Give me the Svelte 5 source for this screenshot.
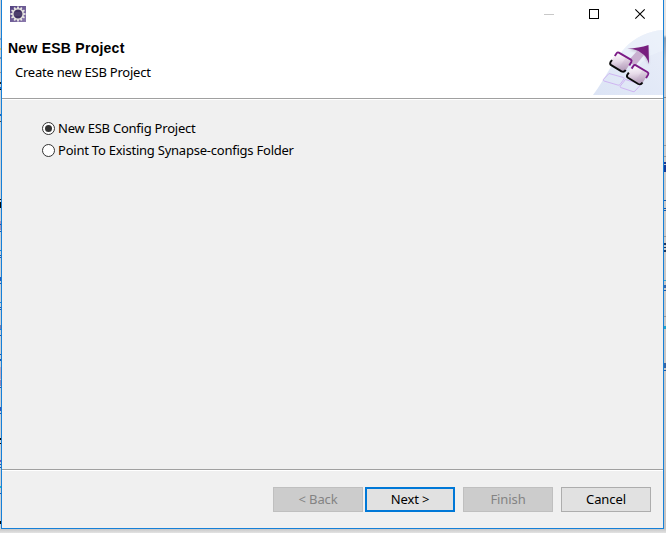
<script>
  const leftMarks = [
    [38, 2, '#8aa4c4'], [48, 2, '#e0bd68'], [57, 2, '#7891b0'], [72, 1, '#999'], [82, 2, '#222'], [87, 2, '#236cc0'], [89, 1, '#111'],
    [114, 2, '#176ac1'], [121, 1, '#444'], [199, 1, '#111'], [202, 6, '#080808'], [221, 9, '#a996bc'], [224, 1, '#1758b1'], [231, 1, '#1758b1'],
    [250, 1, '#1684dd'], [255, 1, '#1758b1'], [257, 1, '#1758b1'], [277, 4, '#225dbb'], [283, 1, '#1758b1'],
    [302, 1, '#1684dd'], [307, 1, '#1758b1'], [309, 1, '#1758b1'], [325, 4, '#817da9'], [329, 1, '#1684dd'], [335, 1, '#1758b1'],
    [354, 1, '#1758b1'], [359, 2, '#1758b1'], [367, 12, '#c2aabd'], [380, 6, '#9688b5'], [387, 1, '#1758b1'],
    [407, 4, '#3155b7'], [413, 1, '#1758b1'], [438, 2, '#050505'], [443, 1, '#050505'], [460, 2, '#6654b8'], [464, 1, '#1758b1'], [467, 1, '#1758b1'],
    [486, 2, '#24b4d0'], [493, 1, '#1758b1'], [521, 3, '#050505']
  ];
  const rightMarks = [
    [97, 1, '#888'], [145, 1, '#999'], [156, 1, '#999'], [162, 2, '#173b9a'], [165, 7, '#173b9a'], [200, 1, '#1559ae'], [208, 1, '#1559ae'], [210, 1, '#1559ae'],
    [236, 1, '#999'], [243, 2, '#1b3764'], [247, 1, '#1b3764'], [250, 2, '#1b3764'], [280, 1, '#32a4ce'], [285, 3, '#3b69ab'], [290, 1, '#1559ae'],
    [316, 1, '#999'], [326, 3, '#22a4cb'], [363, 5, '#3766a5'], [370, 1, '#1559ae']
  ];
  const teeth = Array.from({ length: 12 }, (_, i) => i * 30);
  const tiles = [[0, 0], [16.8, 12.6]];
  let selected = $state('new');
</script>

<div class="desktop">
  <div class="edge left">
    {#each leftMarks as [y, h, color]}
      <i style="top:{y}px;height:{h}px;background:{color}"></i>
    {/each}
  </div>
  <main class="window">
    <header>
      <div class="titlebar">
        <svg class="app-icon" width="16" height="16" viewBox="0 0 16 16">
          <defs><linearGradient id="app-bg" x2="1" y2="1"><stop stop-color="#51407f" /><stop offset="1" stop-color="#8c7aad" /></linearGradient></defs>
          <rect width="16" height="16" fill="url(#app-bg)" />
          {#each teeth as angle}
            <rect x="7.1" y=".5" width="1.8" height="3" fill="#e9e7e4" transform="rotate({angle} 8 8)" />
          {/each}
          <circle cx="8" cy="8" r="5.2" fill="#3f3160" stroke="#e6e4df" stroke-width="1.5" />
          <path d="M4 7h8M4 9h8" stroke="#655580" stroke-width=".8" />
        </svg>
        <svg class="controls" width="102" height="12" viewBox="0 0 102 12" fill="none">
          <path d="M0 6.5h10" stroke="#c8c8c8" />
          <rect x="45.5" y="1.5" width="9" height="9" stroke="#000" />
          <path d="m91.3 1.3 9.4 9.4m0-9.4-9.4 9.4" stroke="#000" stroke-width="1.1" />
        </svg>
      </div>
      <div class="heading">
        <div class="copy">
          <h1>New ESB Project</h1>
          <p>Create new ESB Project</p>
        </div>
        <svg class="banner" width="71" height="67" viewBox="0 0 71 67" fill="none">
          <defs>
            <linearGradient id="sky" x1="0" y1="1" x2="1" y2="0"><stop stop-color="#dce4f5" /><stop offset="1" stop-color="#e9eef9" /></linearGradient>
            <linearGradient id="tile" x1=".4" y1="0" x2=".55" y2="1"><stop stop-color="#fff" /><stop offset=".45" stop-color="#e7dbe9" /><stop offset="1" stop-color="#ac94b3" /></linearGradient>
            <linearGradient id="head"><stop stop-color="#a986b3" /><stop offset=".35" stop-color="#7b2582" /><stop offset="1" stop-color="#761d7d" /></linearGradient>
            <filter id="soft" x="-30%" y="-30%" width="160%" height="160%"><feGaussianBlur stdDeviation="1" /></filter>
          </defs>
          <path d="M1 67C14 50 19 35 33 20 43 9 57 3 71 2v65Z" fill="url(#sky)" />
          <path d="M30 23C42 9 57 3 71 2v21C58 26 50 33 45 40Z" fill="#edf2fb" opacity=".65" />
          <path d="m17 45.5 14.5 4q1.2.5.5 1.5l-4 5.5q-.7 1-2 .6L12 53q-1.3-.5-.5-1.7Zm16.5 6 14 4.5q1.2.5.5 1.5L43 63q-.8 1-2 .6L28.7 59.5q-1.2-.5-.4-1.5Z" stroke="#cfb5f2" />
          <path d="m37 22 19-3 1 18-5-10-6-3Z" fill="#8a7794" opacity=".4" filter="url(#soft)" />
          <path d="m46 22 6 5-9 11-7-5Z" fill="#c9b0d0" />
          <path d="M35 20.7C43 20.4 50 19 56.5 17L57 36C55.5 31 54 29 52 27L46.5 23C43 21.2 39 20.8 35 20.7Z" fill="url(#head)" />
          {#each tiles as [x, y]}
            <g transform="translate({x} {y})">
              <path d="M26.2 24.4 38.8 31.5q1 .8.5 2.2L34 42q-1.5 2-4 1L19.3 36.3q-1.7-1.3-.5-3.3l5-7.5q1-1.7 2.4-1.1Z" fill="url(#tile)" />
              <path d="m33.5 30-6 9 4 2.7q2 .3 3-1.7l4-6.5Z" fill="#bea6c3" opacity=".25" />
              <path d="m22.8 28 2-3q.8-1 2-.4l12 7q1.3.9.5 2.4l-2 3.5" stroke="#7b1b86" stroke-width="1.9" />
              <path d="m20 32-1.6 2.3q-.8 1.7.8 2.8L29.5 43.4q2.6 1.2 4.2-1.4" stroke="#090909" stroke-width="1.9" />
            </g>
          {/each}
        </svg>
      </div>
    </header>
    <section>
      <label><input type="radio" bind:group={selected} value="new" /><span class="new-option">New ESB Config Project</span></label>
      <label><input type="radio" bind:group={selected} value="existing" /><span class="existing-option">Point To Existing Synapse-configs Folder</span></label>
    </section>
    <footer>
      <button disabled>&lt; Back</button>
      <button class="next">Next &gt;</button>
      <button class="finish" disabled>Finish</button>
      <button class="cancel">Cancel</button>
    </footer>
  </main>
  <div class="edge right">
    {#each rightMarks as [y, h, color]}
      <i style="top:{y}px;height:{h}px;background:{color}"></i>
    {/each}
  </div>
</div>

<style>
  * { box-sizing: border-box; }
  :global(body) { overflow: hidden; }
  .desktop { width: 666px; height: 533px; display: flex; background: linear-gradient(#bcbcbc 0 529px, #c8c8c8 529px, #e3e3e3 533px); font: 13px/18px "Noto Sans", sans-serif; letter-spacing: -.23px; color: #000; }
  .edge { position: relative; flex: none; height: 529px; background: #ccd1d7; }
  .left { width: 1px; }
  .right { width: 2px; background: linear-gradient(#e4e4e4 0 35px, #8b9fb4 38px, #b9c2cc 60px, #ccc 100px, #c5c5c5); }
  .edge i { position: absolute; left: 0; width: 100%; }
  .window { width: 663px; height: 529px; display: flex; flex-direction: column; border: solid #1680d8; border-width: 0 1px 1px; background: #f0f0f0; }
  header { height: 99px; background: #fff; border-bottom: 1px solid #a0a0a0; }
  .titlebar { height: 28px; display: flex; justify-content: space-between; padding: 6px 17px 0 8px; }
  .controls { margin-top: 2px; }
  .heading { height: 67px; display: flex; justify-content: space-between; }
  .copy { padding: 11px 0 0 6px; }
  h1 { margin: 0; font: bold 14px/18px "Liberation Sans", Arial, sans-serif; letter-spacing: .25px; }
  p { margin: 6px 0 0 7px; line-height: 18px; }
  section { height: 370px; padding: 20px 0 0 40px; border-top: 1px solid #fff; }
  label { height: 22px; display: flex; align-items: flex-start; gap: 3px; }
  label span { line-height: 16px; }
  input { appearance: none; width: 13px; height: 13px; flex: none; margin: 2px 0 0; border: 1px solid #333; border-radius: 50%; background: #fff; display: grid; place-items: center; }
  input:checked::after { content: ""; width: 7px; height: 7px; border-radius: 50%; background: #333; }
  footer { flex: 1; display: flex; justify-content: flex-end; padding: 17px 12px 0 0; border-top: 1px solid #a0a0a0; box-shadow: inset 0 1px #fff; }
  button { width: 90px; height: 25px; margin: 0; padding: 0 0 1px; border: 1px solid #adadad; background: #e1e1e1; color: #000; font: 13px/18px "Noto Sans", sans-serif; letter-spacing: -.1px; }
  button:disabled { color: #838383; background: #ccc; border-color: #bfbfbf; }
  .next { margin-left: 2px; border: 2px solid #0078d7; }
  .finish, .cancel { margin-left: 8px; }
</style>
